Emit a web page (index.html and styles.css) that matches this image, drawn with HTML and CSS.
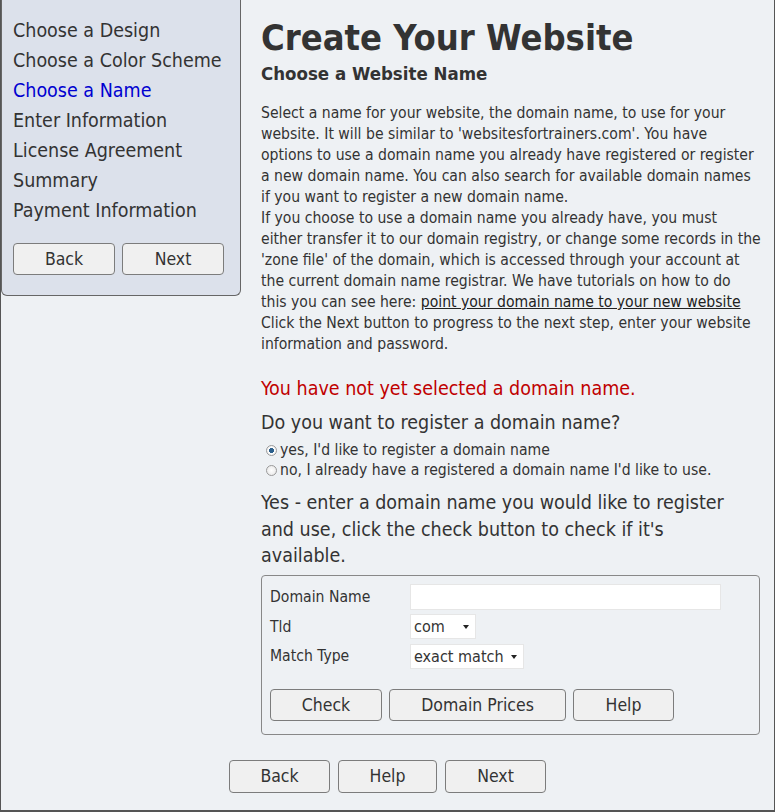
FILE: index.html
```html
<!DOCTYPE html>
<html lang="en">
<head>
  <meta charset="UTF-8" />
  <title>Create Your Website</title>
  <link rel="stylesheet" href="styles.css">
</head>
<body>
  <div class="page">
    <div class="content">
      <div class="sidebar">
        <ul class="steps">
          <li>Choose a Design</li>
          <li>Choose a Color Scheme</li>
          <li class="active">Choose a Name</li>
          <li>Enter Information</li>
          <li>License Agreement</li>
          <li>Summary</li>
          <li>Payment Information</li>
        </ul>
        <div class="side-buttons">
          <button class="btn">Back</button>
          <button class="btn">Next</button>
        </div>
      </div>

      <div class="main">
        <h1 class="title">Create Your Website</h1>
        <h2 class="subtitle">Choose a Website Name</h2>
        <p class="intro">
          Select a name for your website, the domain name, to use for your<br>
          website. It will be similar to 'websitesfortrainers.com'. You have<br>
          options to use a domain name you already have registered or register<br>
          a new domain name. You can also search for available domain names<br>
          if you want to register a new domain name.<br>
          If you choose to use a domain name you already have, you must<br>
          either transfer it to our domain registry, or change some records in the<br>
          'zone file' of the domain, which is accessed through your account at<br>
          the current domain name registrar. We have tutorials on how to do<br>
          this you can see here: <a href="#">point your domain name to your new website</a><br>
          Click the Next button to progress to the next step, enter your website<br>
          information and password.
        </p>

        <div class="warning">You have not yet selected a domain name.</div>
        <div class="question">Do you want to register a domain name?</div>
        <div class="choices">
          <label><input type="radio" name="reg" checked> yes, I'd like to register a domain name</label>
          <label><input type="radio" name="reg"> no, I already have a registered a domain name I'd like to use.</label>
        </div>
        <div class="question tall">Yes - enter a domain name you would like to register<br>
          and use, click the check button to check if it's<br>
          available.</div>

        <div class="search-box">
          <div class="fields">
            <span>Domain Name</span>
            <input type="text" class="domain-input">
            <span>Tld</span>
            <span class="select-wrap"><select class="tld"><option>com</option></select></span>
            <span>Match Type</span>
            <span class="select-wrap"><select class="match"><option>exact match</option></select></span>
          </div>
          <div class="box-buttons">
            <button class="btn check">Check</button>
            <button class="btn prices">Domain Prices</button>
            <button class="btn help">Help</button>
          </div>
        </div>
      </div>
    </div>

    <div class="page-buttons">
      <button class="btn">Back</button>
      <button class="btn narrow">Help</button>
      <button class="btn">Next</button>
    </div>
  </div>
</body>
</html>
```
FILE: styles.css
```css
body {
  margin: 0;
  font-family: 'DejaVu Sans Condensed', 'DejaVu Sans', sans-serif;
  color: #333;
  background-color: #eef1f4;
}
.page {
  box-sizing: border-box;
  height: 812px;
  border-left: 1px solid #555;
  border-right: 1px solid #555;
  border-bottom: 2px solid #555;
}
.content {
  display: flex;
}
.sidebar {
  box-sizing: border-box;
  width: 240px;
  flex-shrink: 0;
  height: 296px;
  padding: 16px 11px 0 11px;
  background-color: #dce1eb;
  border: 1px solid #666;
  border-top: none;
  border-radius: 0 0 6px 6px;
}
.steps {
  list-style: none;
  margin: 0;
  padding: 0;
  font-size: 19.5px;
  line-height: 30px;
}
.steps .active {
  color: #0000d0;
}
.side-buttons {
  display: flex;
  gap: 7px;
  margin-top: 17px;
}
.side-buttons .btn {
  width: 102px;
}
.btn {
  height: 32px;
  padding: 0;
  background-color: #f0f0f0;
  border: 1px solid #7c7c7c;
  border-radius: 4px;
  font-family: inherit;
  font-size: 17.5px;
  color: #333;
}
.main {
  width: 510px;
  margin-left: 20px;
}
.title {
  margin: 16px 0 0 0;
  font-size: 36px;
  line-height: 43px;
  font-weight: bold;
}
.subtitle {
  margin: 4px 0 0 0;
  font-size: 18.5px;
  line-height: 22px;
  font-weight: bold;
}
.intro {
  margin: 18px 0 0 0;
  font-size: 15.6px;
  line-height: 21px;
  white-space: nowrap;
}
.intro a {
  color: #222;
}
.warning {
  margin-top: 21px;
  font-size: 19.5px;
  line-height: 26px;
  color: #c00000;
}
.question {
  margin-top: 8px;
  font-size: 19.5px;
  line-height: 26px;
}
.choices {
  display: flex;
  flex-direction: column;
  margin-top: 4px;
  font-size: 15.6px;
  line-height: 20px;
}
.choices label {
  display: flex;
  align-items: center;
  gap: 3px;
  padding-left: 5px;
}
.choices input {
  appearance: none;
  width: 11px;
  height: 11px;
  margin: 0;
  border: 1px solid #9a9a9a;
  border-radius: 50%;
  background: radial-gradient(circle, #fff 0%, #e4e4e4 100%);
}
.choices input:checked {
  background: radial-gradient(circle, #2b5f8c 0%, #2b5f8c 35%, #fff 42%, #e4e4e4 100%);
}
.question.tall {
  margin-top: 10px;
  line-height: 26.5px;
}
.search-box {
  margin-top: 5px;
  width: 499px;
  box-sizing: border-box;
  padding: 8px 8px 13px 8px;
  border: 1px solid #888;
  border-radius: 4px;
}
.fields {
  display: grid;
  grid-template-columns: 140px auto;
  justify-items: start;
  align-items: center;
  row-gap: 4.5px;
  font-size: 15.6px;
}
.domain-input {
  box-sizing: border-box;
  width: 311px;
  height: 26px;
  border: 1px solid #e6e6e6;
  background: #fff;
}
.select-wrap {
  position: relative;
  display: inline-block;
}
.select-wrap::after {
  content: "";
  position: absolute;
  right: 7px;
  top: 11px;
  border-left: 3.5px solid transparent;
  border-right: 3.5px solid transparent;
  border-top: 4px solid #222;
  pointer-events: none;
}
.select-wrap select {
  appearance: none;
  box-sizing: border-box;
  height: 25px;
  padding: 0 16px 0 3px;
  border: 1px solid #e6e6e6;
  background: #fff;
  font-family: inherit;
  font-size: 16px;
  color: #333;
}
.tld {
  width: 66px;
}
.match {
  width: 114px;
}
.box-buttons {
  display: flex;
  gap: 7px;
  margin-top: 20px;
}
.check {
  width: 112px;
}
.prices {
  width: 177px;
}
.help {
  width: 101px;
}
.page-buttons {
  display: flex;
  justify-content: center;
  gap: 8px;
  margin-top: 25px;
}
.page-buttons .btn {
  width: 101px;
  height: 33px;
}
.page-buttons .narrow {
  width: 99px;
}
```
